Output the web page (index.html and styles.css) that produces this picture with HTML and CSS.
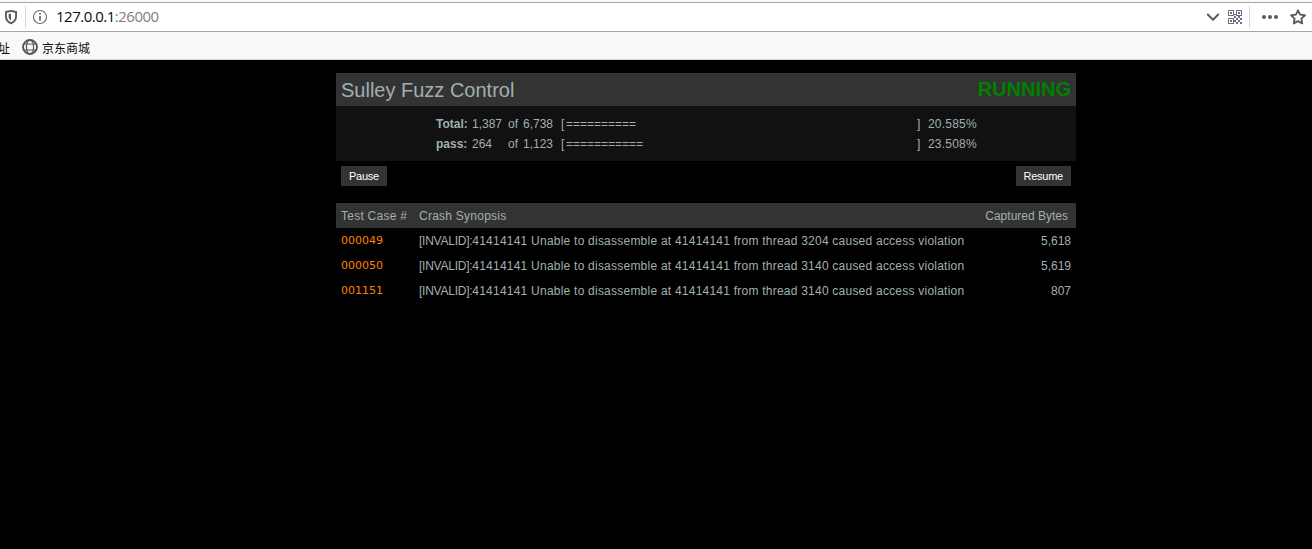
FILE: index.html
```
<!DOCTYPE html>
<html lang="en">
  <head>
    <meta charset="UTF-8">
    <title>Sulley Fuzz Control</title>
    <link rel="stylesheet" href="styles.css">
  </head>
  <body>
    <div class="browser">
      <div class="urlbar">
        <svg class="shield" width="14" height="16" viewBox="0 0 14 16">
          <path d="M7 1.8 L12.1 3 V7 C12.1 10.5 10.2 13 7 14.3 C3.8 13 1.9 10.5 1.9 7 V3 Z" fill="none" stroke="#5c5c60" stroke-width="1.9" stroke-linejoin="round"/>
          <path d="M7 4.4 L4.6 5 V7.2 C4.6 9 5.5 10.5 7 11.4 Z" fill="#5c5c60"/>
        </svg>
        <span class="divider"></span>
        <svg class="info" width="16" height="16" viewBox="0 0 16 16">
          <circle cx="8" cy="8" r="6.5" fill="none" stroke="#6b6b6f" stroke-width="1.1"/>
          <circle cx="8" cy="4.8" r="1" fill="#6b6b6f"/>
          <path d="M8 7 V11.7" stroke="#6b6b6f" stroke-width="1.7"/>
        </svg>
        <span class="url">127.0.0.1<span class="port">:26000</span></span>
        <svg class="chevron" width="14" height="10" viewBox="0 0 14 10">
          <path d="M1.8 2.5 L7 7.8 L12.2 2.5" fill="none" stroke="#5c5c60" stroke-width="2" stroke-linecap="round" stroke-linejoin="round"/>
        </svg>
        <svg class="qr" width="14" height="14" viewBox="0 0 14 14" shape-rendering="crispEdges">
          <path d="M.5 .5h5v5h-5z M8.5 .5h5v5h-5z M.5 8.5h5v5h-5z" fill="none" stroke="#66727f"/>
          <path d="M2 2h2v2h-2z M10 2h2v2h-2z M2 10h2v2h-2z M6 4h2v1h-2z M6 6h2v2h-2z M8 8h2v2h-2z M12 8h2v2h-2z M6 10h2v2h-2z M10 10h2v2h-2z M8 12h2v2h-2z M12 12h2v2h-2z M10 6h2v2h-2z" fill="#66727f"/>
        </svg>
        <span class="divider"></span>
        <svg class="dots" width="16" height="6" viewBox="0 0 16 6" fill="#5c5c60">
          <circle cx="2" cy="3" r="2"/>
          <circle cx="8" cy="3" r="2"/>
          <circle cx="14" cy="3" r="2"/>
        </svg>
        <svg class="star" width="16" height="16" viewBox="0 0 16 16">
          <path d="M8 1.3 L10.1 5.6 L14.9 6.3 L11.4 9.6 L12.2 14.4 L8 12.1 L3.8 14.4 L4.6 9.6 L1.1 6.3 L5.9 5.6 Z" fill="none" stroke="#5c5c60" stroke-width="1.9" stroke-linejoin="round"/>
        </svg>
      </div>
      <div class="bookmarks">
        <span class="bookmark">址</span>
        <svg class="globe" width="16" height="16" viewBox="0 0 16 16" fill="none" stroke="#56565a" stroke-width="1.2">
          <circle cx="8" cy="8" r="7" stroke-width="1.9"/>
          <ellipse cx="8" cy="8" rx="3.6" ry="7"/>
          <path d="M2 5 H14 M2 11 H14"/>
        </svg>
        <span class="bookmark">京东商城</span>
      </div>
    </div>

    <div class="control">
      <div class="header">
        <div class="title">Sulley Fuzz Control</div>
        <div class="status">RUNNING</div>
      </div>
      <div class="progress">
        <div class="progress-row">
          <b>Total:</b>
          <span>1,387</span>
          <span>of</span>
          <span>6,738</span>
          <span>[</span>
          <span>==========</span>
          <span>]</span>
          <span class="percent">20.585%</span>
        </div>
        <div class="progress-row">
          <b>pass:</b>
          <span>264</span>
          <span>of</span>
          <span>1,123</span>
          <span>[</span>
          <span>===========</span>
          <span>]</span>
          <span class="percent">23.508%</span>
        </div>
      </div>
      <div class="buttons">
        <button>Pause</button>
        <button>Resume</button>
      </div>

      <table class="crashes">
        <tr>
          <th class="case">Test Case #</th>
          <th>Crash Synopsis</th>
          <th class="bytes">Captured Bytes</th>
        </tr>
        <tr>
          <td><a href="#">000049</a></td>
          <td class="synopsis"><span class="module">[INVALID]:</span>41414141 Unable to disassemble at 41414141 from thread 3204 caused access violation</td>
          <td class="bytes">5,618</td>
        </tr>
        <tr>
          <td><a href="#">000050</a></td>
          <td class="synopsis"><span class="module">[INVALID]:</span>41414141 Unable to disassemble at 41414141 from thread 3140 caused access violation</td>
          <td class="bytes">5,619</td>
        </tr>
        <tr>
          <td><a href="#">001151</a></td>
          <td class="synopsis"><span class="module">[INVALID]:</span>41414141 Unable to disassemble at 41414141 from thread 3140 caused access violation</td>
          <td class="bytes">807</td>
        </tr>
      </table>
    </div>
  </body>
</html>
```
FILE: styles.css
```
body {
  margin: 0;
  height: 549px;
  overflow: hidden;
  background-color: #000;
  color: #a0b0b0;
  font-family: "Liberation Sans", Arial, sans-serif;
  font-size: 12px;
}

/* Browser bars */
.browser {
  height: 60px;
  box-sizing: border-box;
  background-color: #f9f9fa;
  border-bottom: 1px solid #d8d8da;
  overflow: hidden;
}

.urlbar {
  display: flex;
  align-items: center;
  height: 30px;
  box-sizing: border-box;
  margin-top: 2px;
  padding-left: 4px;
  padding-right: 6px;
  background-color: #fff;
  border-top: 1px solid #a8a8a8;
  border-bottom: 1px solid #a8a8a8;
}

.urlbar svg {
  flex: none;
}

.divider {
  width: 1px;
  height: 22px;
  margin-left: 7px;
  background-color: #d7d7db;
}

.info {
  margin-left: 6px;
}

.url {
  flex: 1;
  margin-left: 8px;
  margin-bottom: 2px;
  color: #0c0c0d;
  font-family: "Open Sans", "Noto Sans", sans-serif;
  font-size: 15px;
  line-height: 20px;
  letter-spacing: -0.5px;
}

.port {
  color: #808080;
}

.qr {
  margin-left: 8px;
}

.dots {
  margin-left: 12px;
}

.star {
  margin-left: 12px;
}

.bookmarks {
  display: flex;
  align-items: center;
  height: 30px;
  margin-left: -2px;
  color: #0c0c0d;
  font-family: "Noto Sans CJK SC", sans-serif;
}

.globe {
  margin: 0 4px 0 12px;
}

/* Fuzzer page */
.control {
  width: 740px;
  margin: 13px 0 0 336px;
}

.header {
  display: flex;
  justify-content: space-between;
  height: 33px;
  box-sizing: border-box;
  padding: 5px;
  background-color: #333;
  font-size: 20px;
  line-height: 24px;
}

.status {
  color: #008000;
  font-weight: bold;
  line-height: 22px;
}

.progress {
  height: 55px;
  box-sizing: border-box;
  padding: 8px 0 0 100px;
  background-color: #111;
}

.progress-row {
  display: grid;
  grid-template-columns: 36px 36px 15px 38px 5px 351px 11px auto;
  line-height: 20px;
}

.percent {
  letter-spacing: 0.2px;
}

.buttons {
  display: flex;
  justify-content: space-between;
  padding: 5px 5px 17px;
}

button {
  height: 20px;
  padding: 0 8px;
  border: 0;
  background-color: #333;
  color: #fff;
  font-family: "Liberation Sans", Arial, sans-serif;
  font-size: 11px;
  letter-spacing: -0.25px;
}

.crashes {
  width: 740px;
  table-layout: fixed;
  border-collapse: collapse;
}

.crashes tr {
  height: 25px;
}

.crashes th {
  background-color: #333;
  font-weight: normal;
  text-align: left;
  letter-spacing: 0.25px;
}

.crashes th,
.crashes td {
  padding: 0 5px;
  white-space: nowrap;
}

.crashes .case {
  width: 68px;
}

.crashes .bytes {
  width: 86px;
  text-align: right;
}

.crashes th.bytes {
  width: 83px;
  padding-right: 8px;
  letter-spacing: 0;
}

.crashes .synopsis {
  letter-spacing: 0.23px;
}

.crashes .module {
  letter-spacing: -0.25px;
}

.crashes a {
  display: block;
  color: #ff8000;
  font-family: "DejaVu Sans", Verdana, sans-serif;
  font-size: 11px;
  line-height: 14px;
  text-decoration: none;
}
```
